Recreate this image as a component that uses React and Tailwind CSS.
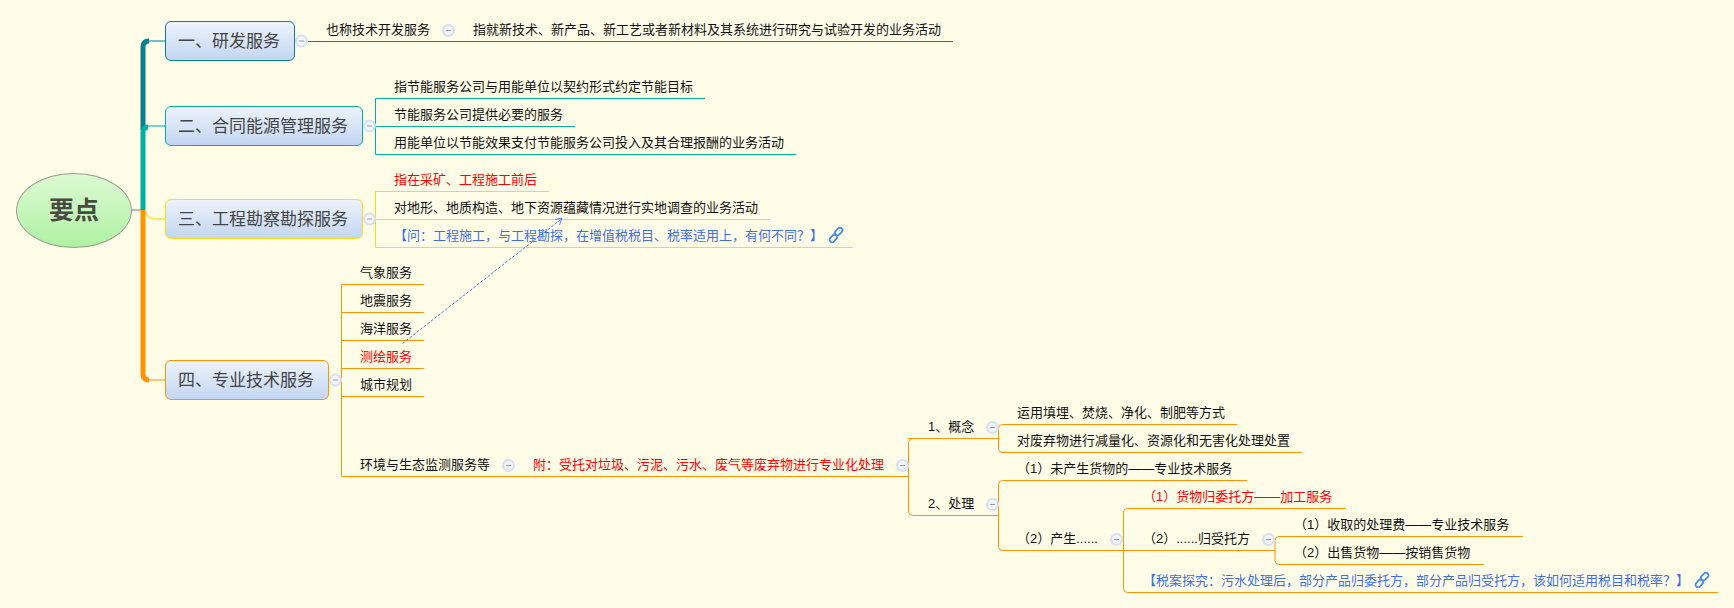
const font = '[font-family:"Liberation_Sans","Noto_Sans_CJK_SC",sans-serif]';

function Collapse({ className = "ml-[12px]" }) {
  return (
    <div className={`flex h-[13px] w-[13px] shrink-0 items-center justify-center rounded-full border-2 border-[#d6dff5] bg-[#f3f6ff] ${className}`}>
      <div className="h-px w-[5px] bg-[#8f9bb8]" />
    </div>
  );
}

function Topic({ className, children }) {
  return (
    <div className={`absolute flex h-[40px] items-center rounded-[6px] border bg-gradient-to-b from-[#edf3fc] to-[#c3d6f2] pl-[12px] pt-[1px] text-[17px] leading-[20px] whitespace-nowrap text-[#444444] ${className}`}>
      {children}
      <Collapse className="absolute left-full top-1/2 ml-px -translate-y-1/2" />
    </div>
  );
}

function Row({ className = "", children }) {
  return (
    <div className={`flex h-[18px] items-center text-[13px] leading-[18px] whitespace-nowrap ${className}`}>{children}</div>
  );
}

function Column({ className, children }) {
  return <div className={`absolute flex flex-col gap-[10px] text-[#111111] ${className}`}>{children}</div>;
}

function LinkIcon() {
  return (
    <svg className="ml-[5px] -mt-[3px] h-[16px] w-[16px] shrink-0" viewBox="0 0 16 16" fill="none" stroke="#3f8be8" strokeWidth="1.8">
      <rect x="8.2" y="0.2" width="5" height="8.6" rx="2.5" transform="rotate(42 10.7 4.5)" />
      <rect x="2.8" y="7.2" width="5" height="8.6" rx="2.5" transform="rotate(42 5.3 11.5)" />
    </svg>
  );
}

const T = "#0b7f8e";
const G = "#00b0a0";
const Y = "#ffd91a";
const O = "#ff9400";

export default function App() {
  return (
    <div className={`relative h-[608px] w-[1734px] overflow-hidden bg-[#fffde8] ${font}`}>
      <svg className="absolute left-0 top-0" width="1734" height="608" fill="none">
        {/* main trunk */}
        <path d="M132 210 H143" stroke="#a8a8a0" strokeWidth="1.5" />
        <path d="M143 130 V47 Q143 41 149 41" stroke={T} strokeWidth="5" />
        <path d="M149 41 H165" stroke="#7dbcc4" strokeWidth="2" />
        <path d="M143 210 V132 Q143 127 148 127" stroke={G} strokeWidth="5" />
        <path d="M148 126 H165" stroke="#77d3ca" strokeWidth="2" />
        <path d="M145 211 Q147 219 155 219 H165" stroke="#ffe566" strokeWidth="2" />
        <path d="M143 210 V374 Q143 380 149 380" stroke={O} strokeWidth="5" />
        <path d="M149 380 H165" stroke="#ffc573" strokeWidth="2" />

        {/* topic 1 */}
        <path d="M307 41.5 H953" stroke={T} strokeWidth="1" />

        {/* topic 2 */}
        <g stroke={G} strokeWidth="1">
          <path d="M705 98.5 H375.5 V154.5 H796" />
          <path d="M374 126.5 H575" />
        </g>

        {/* topic 3 */}
        <g stroke={Y} strokeWidth="1">
          <path d="M549 191.5 H375.5 V247.5 H853" />
          <path d="M374 219.5 H770" />
        </g>

        {/* topic 4 */}
        <g stroke={O} strokeWidth="1">
          <path d="M424 284.5 H341.5 V476.5 H908" />
          <path d="M341 312.5 H424 M341 340.5 H424 M341 368.5 H424 M341 396.5 H424" />
          <path d="M918 438.5 H912.5 Q908.5 438.5 908.5 442.5 V511.5 Q908.5 515.5 912.5 515.5 H998" />
          <path d="M908 438.5 H998" />
          <path d="M1237 424.5 H1002.5 Q998.5 424.5 998.5 428.5 V448.5 Q998.5 452.5 1002.5 452.5 H1302" />
          <path d="M1247 480.5 H1002.5 Q998.5 480.5 998.5 484.5 V546.5 Q998.5 550.5 1002.5 550.5 H1275" />
          <path d="M1346 508.5 H1127.5 Q1123.5 508.5 1123.5 512.5 V588.5 Q1123.5 592.5 1127.5 592.5 H1718" />
          <path d="M1523 536.5 H1279 Q1275 536.5 1275 540.5 V560.5 Q1275 564.5 1279 564.5 H1484" />
        </g>

        {/* relationship arrow */}
        <path d="M402.5 343.5 L562 218.5" stroke="#4a82e4" strokeWidth="1" strokeDasharray="3 1.5" />
        <path d="M555 219.5 L562 218 L559.5 225" stroke="#4a82e4" strokeWidth="1" />
      </svg>

      {/* root */}
      <div className="absolute left-[16px] top-[173px] flex h-[75px] w-[116px] items-center justify-center rounded-[50%] border border-[#9a9a92] bg-gradient-to-b from-[#dcfad2] to-[#aef2a2] text-[25px] font-bold text-[#4a4a44]">
        要点
      </div>

      {/* main topics */}
      <Topic className="left-[165px] top-[21px] w-[130px] border-[#0b7f8e]">一、研发服务</Topic>
      <Topic className="left-[165px] top-[106px] w-[198px] border-[#00b0a0]">二、合同能源管理服务</Topic>
      <Topic className="left-[165px] top-[199px] w-[198px] border-[#ffd91a]">三、工程勘察勘探服务</Topic>
      <Topic className="left-[165px] top-[360px] w-[164px] border-[#ff9400]">四、专业技术服务</Topic>

      {/* branch 1 */}
      <Column className="left-[326px] top-[21px]">
        <Row>
          也称技术开发服务
          <Collapse />
          <span className="ml-[18px]">指就新技术、新产品、新工艺或者新材料及其系统进行研究与试验开发的业务活动</span>
        </Row>
      </Column>

      {/* branch 2 */}
      <Column className="left-[394px] top-[78px]">
        <Row>指节能服务公司与用能单位以契约形式约定节能目标</Row>
        <Row>节能服务公司提供必要的服务</Row>
        <Row>用能单位以节能效果支付节能服务公司投入及其合理报酬的业务活动</Row>
      </Column>

      {/* branch 3 */}
      <Column className="left-[394px] top-[171px]">
        <Row className="text-[#ff0000]">指在采矿、工程施工前后</Row>
        <Row>对地形、地质构造、地下资源蕴藏情况进行实地调查的业务活动</Row>
        <Row className="text-[#3f6fe8]">
          【问：工程施工，与工程勘探，在增值税税目、税率适用上，有何不同？】
          <LinkIcon />
        </Row>
      </Column>

      {/* branch 4 */}
      <Column className="left-[360px] top-[264px]">
        <Row>气象服务</Row>
        <Row>地震服务</Row>
        <Row>海洋服务</Row>
        <Row className="text-[#ff0000]">测绘服务</Row>
        <Row>城市规划</Row>
      </Column>
      <Column className="left-[360px] top-[456px]">
        <Row>
          环境与生态监测服务等
          <Collapse />
          <span className="ml-[18px] text-[#ff0000]">附：受托对垃圾、污泥、污水、废气等废弃物进行专业化处理</span>
          <Collapse />
        </Row>
      </Column>

      <Column className="left-[928px] top-[418px] gap-[59px]">
        <Row>
          1、概念
          <Collapse />
        </Row>
        <Row>
          2、处理
          <Collapse />
        </Row>
      </Column>

      <Column className="left-[1017px] top-[404px]">
        <Row>运用填埋、焚烧、净化、制肥等方式</Row>
        <Row>对废弃物进行减量化、资源化和无害化处理处置</Row>
        <Row>（1）未产生货物的——专业技术服务</Row>
        <Row className="mt-[42px]">
          （2）产生......
          <Collapse />
        </Row>
      </Column>

      <Column className="left-[1143px] top-[488px] gap-[24px]">
        <Row className="text-[#ff0000]">（1）货物归委托方——加工服务</Row>
        <Row>
          （2）......归受托方
          <Collapse />
        </Row>
        <Row className="text-[#3f6fe8]">
          【税案探究：污水处理后，部分产品归委托方，部分产品归受托方，该如何适用税目和税率？】
          <LinkIcon />
        </Row>
      </Column>

      <Column className="left-[1294px] top-[516px]">
        <Row>（1）收取的处理费——专业技术服务</Row>
        <Row>（2）出售货物——按销售货物</Row>
      </Column>
    </div>
  );
}
